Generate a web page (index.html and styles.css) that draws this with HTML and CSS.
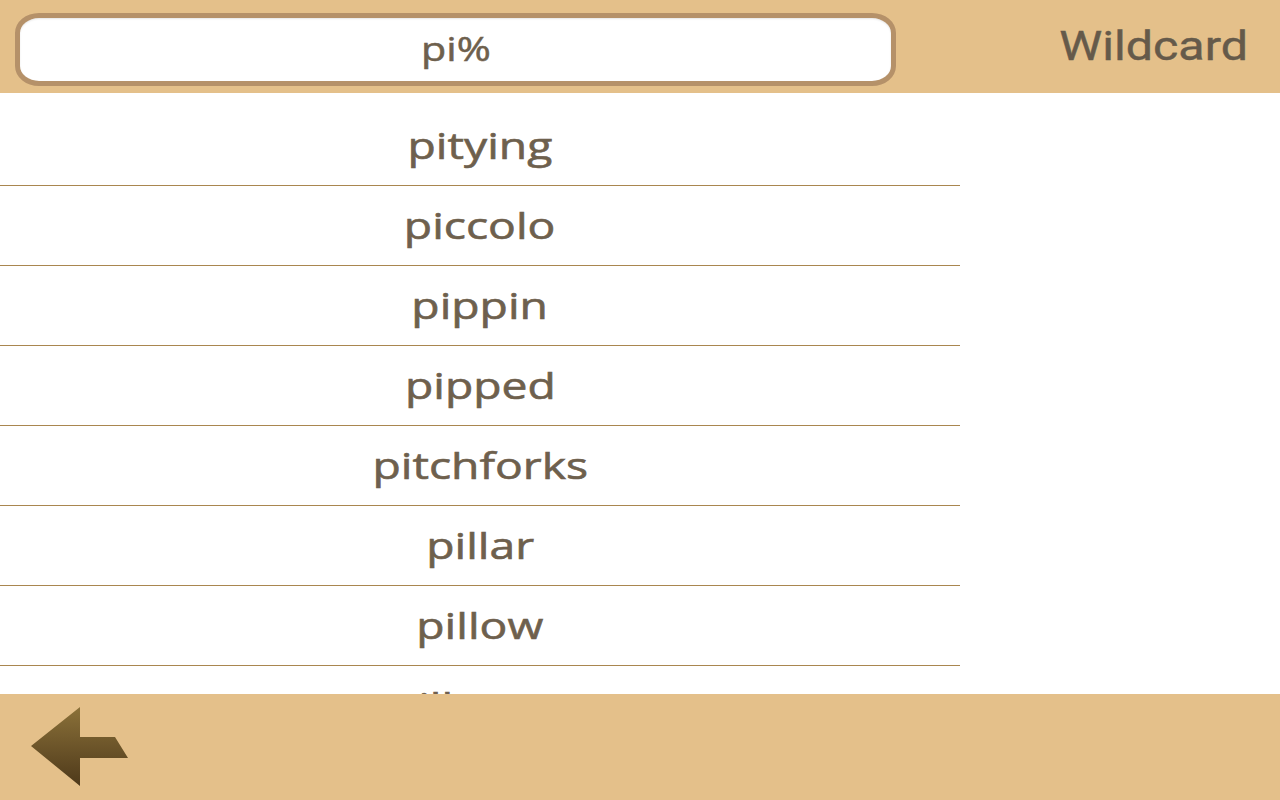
FILE: index.html
```html
<!DOCTYPE html>
<html>
<head>
<meta charset="utf-8">
<link rel="stylesheet" href="styles.css">
</head>
<body>
<div class="app">
  <header class="topbar">
    <div class="search"><span class="query">pi%</span></div>
    <div class="mode"><span class="mode-label">Wildcard</span></div>
  </header>
  <main class="results">
    <ul class="list">
      <li class="row"><span class="word">pitying</span></li>
      <li class="row"><span class="word">piccolo</span></li>
      <li class="row"><span class="word">pippin</span></li>
      <li class="row"><span class="word">pipped</span></li>
      <li class="row"><span class="word">pitchforks</span></li>
      <li class="row"><span class="word">pillar</span></li>
      <li class="row"><span class="word">pillow</span></li>
      <li class="row"><span class="word">pillagers</span></li>
    </ul>
  </main>
  <footer class="bottombar">
    <button class="back" aria-label="Back">
      <svg width="100" height="84" viewBox="0 0 100 84">
        <defs>
          <linearGradient id="ag" x1="0" y1="0" x2="0" y2="1">
            <stop offset="0" stop-color="#8b7139"/>
            <stop offset="1" stop-color="#4e391a"/>
          </linearGradient>
        </defs>
        <polygon points="0,40 49,1 49,31 84,31 97,52 49,52 49,80" fill="url(#ag)"/>
      </svg>
    </button>
  </footer>
</div>
</body>
</html>
```
FILE: styles.css
```css
* { box-sizing: border-box; }
html, body { margin: 0; padding: 0; }
body { background: #ffffff; font-family: "Open Sans", "Noto Sans", sans-serif; }
.app { width: 1280px; height: 800px; display: flex; flex-direction: column; overflow: hidden; }
.topbar {
  height: 93px; flex: none; background: #e4c08a;
  display: flex; align-items: flex-start; padding: 13px 32px 0 15px;
}
.search {
  width: 881px; height: 73px;
  background: #ffffff; border: 5px solid #b59169; border-radius: 24px / 20px;
  display: flex; align-items: center; justify-content: center;
  box-shadow: inset 0 1px 2px rgba(0,0,0,0.10);
}
.query {
  display: inline-block; transform: scaleX(1.25);
  font-size: 33px; font-weight: 400; color: #6e604d; line-height: 1; margin-bottom: 3px;
  -webkit-text-stroke: 0.5px #6e604d;
}
.mode { margin-left: auto; padding-top: 14px; }
.mode-label {
  display: inline-block; transform: scaleX(1.21); transform-origin: right center;
  font-family: Roboto, "Liberation Sans", sans-serif;
  font-size: 40px; font-weight: 400; color: #655a4a; line-height: 1;
  -webkit-text-stroke: 0.4px #655a4a;
}
.results { flex: 1; overflow: hidden; }
.list { list-style: none; margin: 0; padding: 13px 0 0 0; width: 960px; }
.row {
  height: 80px; border-bottom: 1px solid #a9864f;
  display: flex; align-items: center; justify-content: center;
  padding-bottom: 3px;
}
.word {
  display: inline-block; transform: scaleX(1.25);
  font-size: 37px; font-weight: 400; color: #6e604d; line-height: 1;
  -webkit-text-stroke: 0.6px #6e604d;
}
.bottombar { height: 106px; flex: none; background: #e4c08a; display: flex; align-items: flex-start; padding: 12px 0 0 31px; }
.back { background: none; border: 0; padding: 0; margin: 0; cursor: pointer; display: block; }
.back svg { display: block; }
```
